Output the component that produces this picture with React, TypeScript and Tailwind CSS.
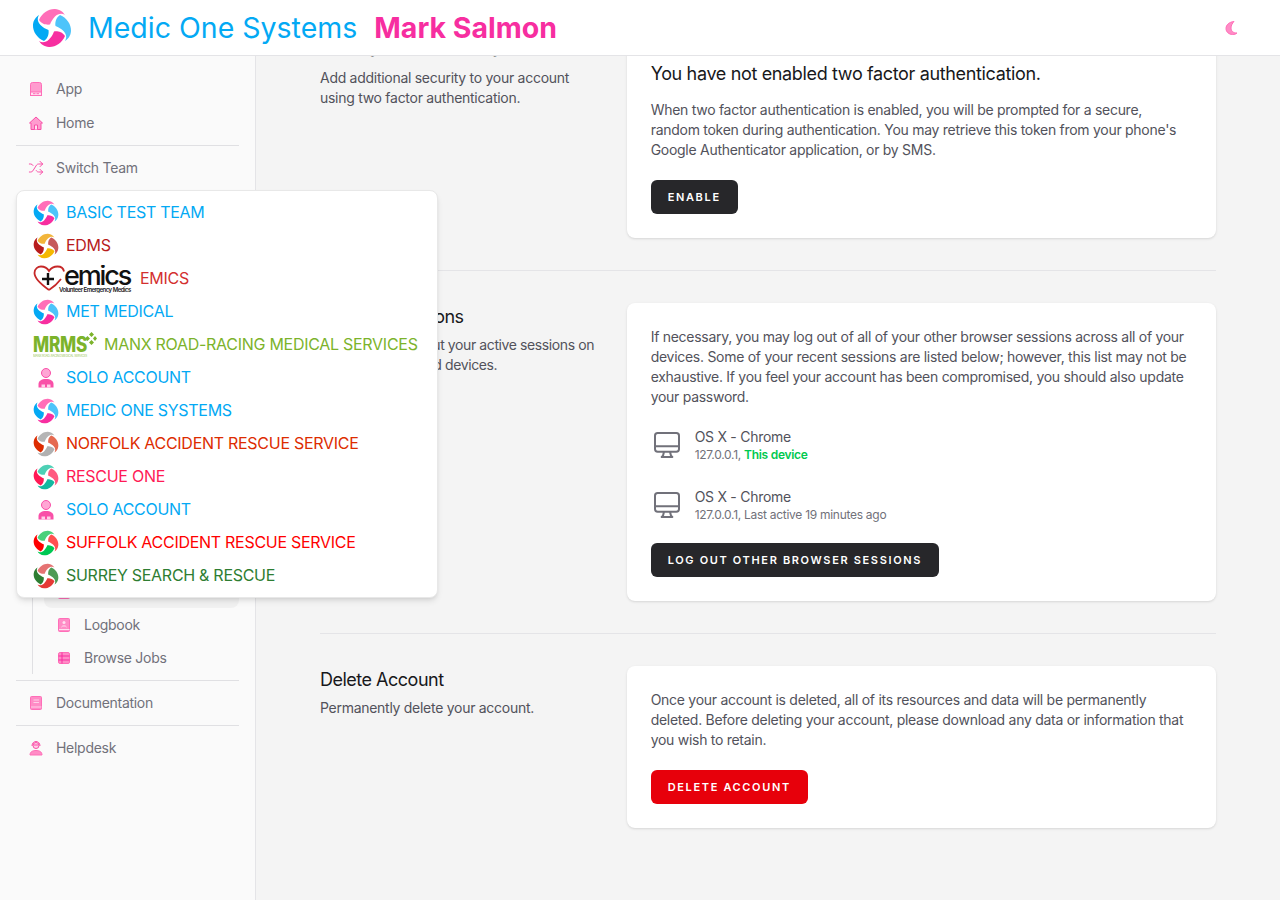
import { Shuffle } from 'lucide-react';
import type { ReactNode } from 'react';

const Swirl = ({ colors, size = 26 }: { colors: string[]; size?: number }) => (
  <svg width={size} height={size} viewBox="0 0 40 40" className="shrink-0">
    {colors.map((c, i) => (
      <path
        key={i}
        transform={`rotate(${i * 90} 20 20)`}
        fill={c}
        d="M18 16.5C15 17 10 16.5 7 12C10 5 16.5 0.7 23 1C28 1.3 31 4 33 7C30 5 26 5.5 23 8.5C21 10.5 19 13.5 18 16.5Z"
      />
    ))}
  </svg>
);

const Solo = () => (
  <span className="flex w-[26px] shrink-0 justify-center">
    <svg width="16" height="20" viewBox="0 0 16 20">
      <circle cx="8" cy="5" r="4.5" fill="#ffa6d5" stroke="#f950a8" strokeWidth="1" />
      <path d="M0.5 19.5V16C0.5 13 3.5 11 8 11C12.5 11 15.5 13 15.5 16V19.5Z" fill="#f950a8" />
      <path d="M3.5 19.5V16.5H7V19.5M9 19.5V16.5H12.5V19.5" fill="#ffd0e8" />
    </svg>
  </span>
);

const EmicsLogo = () => (
  <svg width="100" height="28" viewBox="0 0 100 28" className="shrink-0 normal-case">
    <path
      d="M16 25C9 20 1.5 14 1.5 8C1.5 3.5 5 1.5 8 1.5C11.5 1.5 14.5 3.5 16 6C18 3 21 1.5 24.5 1.5C28 1.5 30.5 3.5 31 6.5"
      fill="none"
      stroke="#c62828"
      strokeWidth="1.8"
    />
    <path d="M16 25C20 22.5 25 18 28 14" fill="none" stroke="#c62828" strokeWidth="1.8" />
    <path d="M15 8V20M9 14H21" stroke="#111" strokeWidth="2.4" />
    <text x="31" y="20" fontSize="27" fontWeight="500" fill="#111" textLength="68" fontFamily="Inter, sans-serif">
      emics
    </text>
    <text x="26" y="27" fontSize="6" fontWeight="600" fill="#222" textLength="72" fontFamily="Inter, sans-serif">
      Volunteer Emergency Medics
    </text>
  </svg>
);

const MrmsLogo = () => (
  <svg width="64" height="25" viewBox="0 0 64 25" className="shrink-0">
    <text x="0" y="20" fontSize="21" fontWeight="800" fill="#7cb32b" textLength="54" lengthAdjust="spacingAndGlyphs" fontFamily="Inter, sans-serif">
      MRMS
    </text>
    <text x="0" y="24.5" fontSize="3" fill="#9cc75c" textLength="54" fontFamily="Inter, sans-serif">
      Manx Road-Racing Medical Services
    </text>
    <path d="M58.5 0L61 2.5L58.5 5L56 2.5ZM54.5 4L57 6.5L54.5 9L52 6.5ZM62 4L64 6.5L62 9L60 6.5ZM58.5 8L61 10.5L58.5 13L56 10.5Z" fill="#7cb32b" />
  </svg>
);

const blue = ['#ff6eb8', '#4dc4fa', '#f72ea0', '#03a9f4'];

const teams: { name: string; color: string; logo: ReactNode }[] = [
  { name: 'Basic Test Team', color: 'text-[#03a9f4]', logo: <Swirl colors={blue} /> },
  { name: 'EDMS', color: 'text-[#b71c1c]', logo: <Swirl colors={['#f2b53a', '#c65a5a', '#f5b800', '#b71c1c']} /> },
  { name: 'EMICS', color: 'text-[#d32f2f]', logo: <EmicsLogo /> },
  { name: 'MET Medical', color: 'text-[#03a9f4]', logo: <Swirl colors={blue} /> },
  { name: 'Manx Road-Racing Medical Services', color: 'text-[#7cb32b]', logo: <MrmsLogo /> },
  { name: 'Solo Account', color: 'text-[#03a9f4]', logo: <Solo /> },
  { name: 'Medic One Systems', color: 'text-[#03a9f4]', logo: <Swirl colors={blue} /> },
  { name: 'Norfolk Accident Rescue Service', color: 'text-[#dd2c00]', logo: <Swirl colors={['#b5b5b5', '#e56a50', '#b0b0b0', '#dd2c00']} /> },
  { name: 'Rescue One', color: 'text-[#ff1a55]', logo: <Swirl colors={['#4dd0b5', '#ff5a80', '#14b8a0', '#ff1a55']} /> },
  { name: 'Solo Account', color: 'text-[#03a9f4]', logo: <Solo /> },
  { name: 'Suffolk Accident Rescue Service', color: 'text-[#ff0000]', logo: <Swirl colors={['#4ad07a', '#ff5050', '#00c853', '#ff0000']} /> },
  { name: 'Surrey Search & Rescue', color: 'text-[#2e7d32]', logo: <Swirl colors={['#e57373', '#4f9a55', '#e53935', '#2e7d32']} /> },
];

const Duo = ({ children }: { children: ReactNode }) => (
  <svg width="16" height="16" viewBox="0 0 16 16" className="shrink-0">
    {children}
  </svg>
);

const AppIcon = () => (
  <Duo>
    <rect x="2.5" y="1.5" width="11" height="13" rx="2" fill="#ff9ccf" stroke="#ff6eb8" />
    <rect x="2.5" y="11" width="11" height="3.5" fill="#ffe0f0" stroke="#ff6eb8" />
    <path d="M5 12.7H7.5M8.5 12.7H11" stroke="#ff6eb8" />
  </Duo>
);

const HomeIcon = () => (
  <Duo>
    <path d="M1.5 8L8 2L14.5 8H13V14.5H3V8Z" fill="#ff9ccf" stroke="#f950a8" />
    <path d="M6.5 14.5V10H9.5V14.5" fill="#ffe0f0" stroke="#f950a8" />
  </Duo>
);

const DocIcon = () => (
  <Duo>
    <rect x="2.5" y="1.5" width="11" height="13" rx="1" fill="#ff8cc6" stroke="#ff6eb8" />
    <path d="M5.5 5H11M5.5 7.5H11M3 12H13.5" stroke="#ffd0e8" />
  </Duo>
);

const LogbookIcon = () => (
  <Duo>
    <rect x="2.5" y="1.5" width="11" height="13" rx="1" fill="#ff8cc6" stroke="#ff6eb8" />
    <circle cx="8" cy="5.5" r="1.5" fill="#ffe0f0" />
    <path d="M5.5 10C6 8.5 10 8.5 10.5 10M3 12.5H13.5" stroke="#ffe0f0" fill="none" />
  </Duo>
);

const JobsIcon = () => (
  <Duo>
    <rect x="2.5" y="2.5" width="11" height="11" rx="1.5" fill="#ff8cc6" stroke="#ff6eb8" />
    <path d="M2.5 6H13.5M2.5 10H13.5M6 2.5V13.5" stroke="#f72ea0" />
  </Duo>
);

const HelpIcon = () => (
  <Duo>
    <circle cx="8" cy="5.5" r="3" fill="#ffd0e8" stroke="#f950a8" />
    <path d="M4 6C4 0 12 0 12 6M5.5 5H10.5" fill="none" stroke="#f950a8" />
    <path d="M2 15C2 11.5 5 10.5 8 10.5C11 10.5 14 11.5 14 15Z" fill="#ff8cc6" stroke="#ff6eb8" />
  </Duo>
);

const NavRow = ({ icon, label }: { icon: ReactNode; label: string }) => (
  <div className="flex h-[34px] items-center gap-3 px-3 text-sm text-[#71717a]">
    {icon}
    <span>{label}</span>
  </div>
);

const SubRow = ({ icon, label }: { icon: ReactNode; label: string }) => (
  <div className="flex h-[33px] items-center gap-3 px-3 text-sm text-[#71717a]">
    {icon}
    <span>{label}</span>
  </div>
);

const Monitor = () => (
  <svg className="h-8 w-8 shrink-0 text-[#71717a]" viewBox="0 0 24 24" fill="none" stroke="currentColor" strokeWidth="1.5" strokeLinecap="round" strokeLinejoin="round">
    <path d="M9.75 17L9 20l-1 1h8l-1-1-.75-3M3 13h18M5 17h14a2 2 0 002-2V5a2 2 0 00-2-2H5a2 2 0 00-2 2v10a2 2 0 002 2z" />
  </svg>
);

const Btn = ({ label, red }: { label: string; red?: boolean }) => (
  <button className={`inline-flex h-[34px] items-center rounded-md px-[17px] text-[11px] font-semibold tracking-[0.15em] text-white uppercase ${red ? 'bg-[#e7000b]' : 'bg-[#27272a]'}`}>
    {label}
  </button>
);

const Section = ({ title, desc, children }: { title: string; desc: ReactNode; children: ReactNode }) => (
  <div className="grid grid-cols-3 gap-6">
    <div>
      <h3 className="text-lg leading-7 font-normal tracking-[-0.5px] text-[#18181b]">{title}</h3>
      <p className="mt-1 text-sm leading-5 text-[#52525b]">{desc}</p>
    </div>
    <div className="col-span-2 rounded-lg bg-white p-6 shadow-sm">{children}</div>
  </div>
);

const Session = ({ children }: { children: ReactNode }) => (
  <div className="flex items-center">
    <Monitor />
    <div className="ml-3">
      <div className="text-sm leading-5 text-[#52525b]">OS X - Chrome</div>
      <div className="text-xs leading-4 text-[#71717a]">{children}</div>
    </div>
  </div>
);

export default function App() {
  return (
    <div className="flex h-screen flex-col overflow-hidden bg-[#f4f4f4] font-[Inter,sans-serif] tracking-[-0.28px]">
      <header className="relative z-10 flex h-14 shrink-0 items-center border-b border-[#e4e4e7] bg-white pr-10 pl-8 tracking-normal">
        <Swirl colors={blue} size={40} />
        <span className="mt-px ml-4 text-[28.5px] text-[#03a9f4]">Medic One Systems</span>
        <span className="mt-px ml-[17px] text-[28.5px] font-bold text-[#f72ea0]">Mark Salmon</span>
        <svg className="ml-auto" width="16" height="16" viewBox="0 0 16 16">
          <path d="M10 1.5C5 2 2 5 2 8.5C2 12 5 14.5 8.5 14.5C10.5 14.5 12 14 13 13C9 13 7 11 7 8C7 5.5 8.5 3 10 1.5Z" fill="#ff8cc6" stroke="#ff6eb8" />
        </svg>
      </header>

      <div className="flex min-h-0 flex-1">
        <aside className="relative z-[5] w-64 shrink-0 border-r border-[#e4e4e7] bg-[#fafafa] px-4 pt-4">
          <NavRow icon={<AppIcon />} label="App" />
          <NavRow icon={<HomeIcon />} label="Home" />
          <hr className="my-[5px] border-[#e0e0e3]" />
          <NavRow icon={<Shuffle size={16} strokeWidth={1.5} className="text-[#f950a8]" />} label="Switch Team" />

          <div className="h-[340px]" />
          <div className="ml-4 border-l border-[#e0e0e3] pl-[11px]">
            <div className="h-[50px]" />
            <div className="h-[33px] rounded-lg bg-[#f1f1f1] px-3 pt-[9px]">
              <LogbookIcon />
            </div>
            <SubRow icon={<LogbookIcon />} label="Logbook" />
            <div className="-mb-[5px]">
              <SubRow icon={<JobsIcon />} label="Browse Jobs" />
            </div>
          </div>
          <hr className="mt-[11px] mb-[5px] border-[#e0e0e3]" />
          <NavRow icon={<DocIcon />} label="Documentation" />
          <hr className="my-[5px] border-[#e0e0e3]" />
          <NavRow icon={<HelpIcon />} label="Helpdesk" />

          <div className="absolute top-[134px] left-4 w-[422px] rounded-lg border border-[#e8e8e8] bg-white px-4 py-[5px] shadow-md">
            {teams.map((t, i) => (
              <div key={i} className={`flex h-[33px] items-center gap-[7px] text-base uppercase ${t.color}`}>
                {t.logo}
                <span className="pb-px whitespace-nowrap">{t.name}</span>
              </div>
            ))}
          </div>
        </aside>

        <main className="min-w-0 flex-1 overflow-hidden px-16">
          <div className="-mt-5">
            <Section title="Two Factor Authentication" desc="Add additional security to your account using two factor authentication.">
              <h3 className="text-lg leading-7 font-normal tracking-[-0.35px] text-[#18181b]">You have not enabled two factor authentication.</h3>
              <p className="mt-3 text-sm leading-5 text-[#52525b]">
                When two factor authentication is enabled, you will be prompted for a secure, random token during authentication. You may retrieve this token from your phone's Google Authenticator application, or by SMS.
              </p>
              <div className="mt-5">
                <Btn label="Enable" />
              </div>
            </Section>

            <div className="py-8">
              <div className="border-t border-[#e4e4e7]" />
            </div>

            <Section
              title="Browser Sessions"
              desc={<span className="tracking-[-0.4px]">Manage and log out your active sessions on other browsers and devices.</span>}
            >
              <p className="text-sm leading-5 text-[#52525b]">
                If necessary, you may log out of all of your other browser sessions across all of your devices. Some of your recent sessions are listed below; however, this list may not be exhaustive. If you feel your account has been compromised, you should also update your password.
              </p>
              <div className="mt-5 space-y-6">
                <Session>
                  127.0.0.1, <span className="font-semibold text-[#00c950]">This device</span>
                </Session>
                <Session>127.0.0.1, Last active 19 minutes ago</Session>
              </div>
              <div className="mt-5">
                <Btn label="Log Out Other Browser Sessions" />
              </div>
            </Section>

            <div className="py-8">
              <div className="border-t border-[#e4e4e7]" />
            </div>

            <Section title="Delete Account" desc="Permanently delete your account.">
              <p className="text-sm leading-5 text-[#52525b]">
                Once your account is deleted, all of its resources and data will be permanently deleted. Before deleting your account, please download any data or information that you wish to retain.
              </p>
              <div className="mt-5">
                <Btn label="Delete Account" red />
              </div>
            </Section>
          </div>
        </main>
      </div>
    </div>
  );
}
